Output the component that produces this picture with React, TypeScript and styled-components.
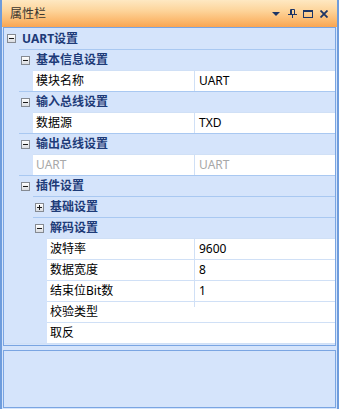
import styled, { createGlobalStyle } from 'styled-components';

const GlobalStyle = createGlobalStyle`
  html, body { margin: 0; padding: 0; background: #ffffff; }
  body { font-family: "Noto Sans", "Noto Sans CJK SC", sans-serif; }
`;

type Divider = 'full' | 'stub' | 'none';

type Item =
  | { kind: 'cat'; level: number; title: string; open: boolean }
  | { kind: 'prop'; level: number; label: string; value: string; disabled?: boolean; divider?: Divider };

const items: Item[] = [
  { kind: 'cat', level: 0, title: 'UART设置', open: true },
  { kind: 'cat', level: 1, title: '基本信息设置', open: true },
  { kind: 'prop', level: 2, label: '模块名称', value: 'UART' },
  { kind: 'cat', level: 1, title: '输入总线设置', open: true },
  { kind: 'prop', level: 2, label: '数据源', value: 'TXD' },
  { kind: 'cat', level: 1, title: '输出总线设置', open: true },
  { kind: 'prop', level: 2, label: 'UART', value: 'UART', disabled: true },
  { kind: 'cat', level: 1, title: '插件设置', open: true },
  { kind: 'cat', level: 2, title: '基础设置', open: false },
  { kind: 'cat', level: 2, title: '解码设置', open: true },
  { kind: 'prop', level: 3, label: '波特率', value: '9600' },
  { kind: 'prop', level: 3, label: '数据宽度', value: '8' },
  { kind: 'prop', level: 3, label: '结束位Bit数', value: '1' },
  { kind: 'prop', level: 3, label: '校验类型', value: '', divider: 'stub' },
  { kind: 'prop', level: 3, label: '取反', value: '', divider: 'none' },
];

// divider between name and value sits at x=190 inside the grid
const LABEL_END = 190;
const indentOf = (level: number) => 1 + level * 14;

export default function App() {
  return (
    <>
      <GlobalStyle />
      <Panel>
        <Header>
          <Title>属性栏</Title>
          <HeaderButtons>
            <HeaderButton>
              <svg width="8" height="4" viewBox="0 0 8 4">
                <polygon points="0,0 8,0 4,4" fill="#1c3566" />
              </svg>
            </HeaderButton>
            <HeaderButton>
              <svg width="9" height="9" viewBox="0 0 9 9">
                <path d="M2.5 0.5 H6.5 V5 M2.5 0.5 V5 M3.5 0.5 V5" stroke="#1c3566" fill="none" />
                <path d="M0 5.5 H9 M4.5 5.5 V9" stroke="#1c3566" fill="none" />
              </svg>
            </HeaderButton>
            <HeaderButton>
              <svg width="10" height="8" viewBox="0 0 10 8">
                <rect x="0.5" y="0.5" width="9" height="7" stroke="#1c3566" fill="none" />
                <path d="M0 1.5 H10" stroke="#1c3566" />
              </svg>
            </HeaderButton>
            <HeaderButton>
              <svg width="8" height="8" viewBox="0 0 8 8">
                <path d="M0.5 0.5 L7.5 7.5 M7.5 0.5 L0.5 7.5" stroke="#1c3566" strokeWidth="1.8" />
              </svg>
            </HeaderButton>
          </HeaderButtons>
        </Header>
        <Body>
          <Grid>
            {items.map((item, idx) => (
              <Row key={`row_${idx}`} $indent={indentOf(item.level)}>
                {item.kind === 'cat' ? (
                  <CategoryCell $first={idx === 0}>
                    <Toggle>
                      <ToggleMinus />
                      {!item.open && <TogglePlus />}
                    </Toggle>
                    <CategoryTitle>{item.title}</CategoryTitle>
                  </CategoryCell>
                ) : (
                  <PropertyCell>
                    <NameCell $width={LABEL_END - indentOf(item.level)} $disabled={item.disabled}>
                      {item.label}
                    </NameCell>
                    <ValueCell $divider={item.divider ?? 'full'} $disabled={item.disabled}>
                      {item.value}
                    </ValueCell>
                  </PropertyCell>
                )}
              </Row>
            ))}
            <GridTail />
          </Grid>
          <Description />
        </Body>
      </Panel>
    </>
  );
}

const Panel = styled.div`
  width: 339px;
  height: 409px;
  box-sizing: border-box;
  padding: 0 2px;
  background: #6e9cdc;
  display: flex;
  flex-direction: column;
`;

const Header = styled.div`
  height: 27px;
  flex-shrink: 0;
  display: flex;
  align-items: center;
  justify-content: space-between;
  padding-left: 8px;
  padding-right: 5px;
  background: linear-gradient(to bottom, #fee8c2 0%, #fdd49a 40%, #fbb66a 80%, #f9a552 100%);
`;

const Title = styled.span`
  font-size: 12px;
  color: #3a3530;
  line-height: 27px;
`;

const HeaderButtons = styled.div`
  display: flex;
  align-items: center;
`;

const HeaderButton = styled.div`
  width: 16px;
  height: 16px;
  display: flex;
  align-items: center;
  justify-content: center;
`;

const Body = styled.div`
  flex: 1;
  display: flex;
  flex-direction: column;
  gap: 4px;
  padding: 0 1px 1px;
  background: #d5e4fb;
`;

const Grid = styled.div`
  border: 1px solid #7aa5e2;
  background: #d5e4fb;
  display: flex;
  flex-direction: column;
`;

const Row = styled.div<{ $indent: number }>`
  height: 21px;
  display: flex;
  padding-left: ${p => p.$indent}px;
`;

const CategoryCell = styled.div<{ $first?: boolean }>`
  flex: 1;
  display: flex;
  align-items: center;
  border-top: ${p => (p.$first ? 'none' : '1px solid #a9c8f1')};
`;

const Toggle = styled.div`
  position: relative;
  width: 9px;
  height: 9px;
  box-sizing: border-box;
  margin-left: 2px;
  margin-right: 6px;
  border: 1px solid #858a92;
  background: linear-gradient(to bottom, #ffffff, #d9dce1);
`;

const ToggleMinus = styled.span`
  position: absolute;
  left: 1px;
  top: 3px;
  width: 5px;
  height: 1px;
  background: #1a1a1a;
`;

const TogglePlus = styled.span`
  position: absolute;
  left: 3px;
  top: 1px;
  width: 1px;
  height: 5px;
  background: #1a1a1a;
`;

const CategoryTitle = styled.span`
  font-size: 12px;
  font-weight: bold;
  color: #1e3b78;
  line-height: 20px;
  white-space: nowrap;
`;

const PropertyCell = styled.div`
  flex: 1;
  display: flex;
  background: #ffffff;
  border-top: 1px solid #d0e0f6;
`;

const NameCell = styled.div<{ $width: number; $disabled?: boolean }>`
  width: ${p => p.$width}px;
  flex-shrink: 0;
  box-sizing: border-box;
  padding-left: 3px;
  font-size: 12px;
  line-height: 20px;
  color: ${p => (p.$disabled ? '#a8a8a8' : '#000000')};
  white-space: nowrap;
`;

const ValueCell = styled.div<{ $divider: Divider; $disabled?: boolean }>`
  position: relative;
  flex: 1;
  padding-left: 4px;
  font-size: 12px;
  line-height: 20px;
  color: ${p => (p.$disabled ? '#a8a8a8' : '#000000')};
  border-left: 1px solid ${p => (p.$divider === 'full' ? '#d0e0f6' : 'transparent')};

  &::before {
    content: '';
    display: ${p => (p.$divider === 'stub' ? 'block' : 'none')};
    position: absolute;
    left: -1px;
    top: 0;
    width: 1px;
    height: 5px;
    background: #d0e0f6;
  }
`;

const GridTail = styled.div`
  height: 2px;
  box-sizing: border-box;
  border-top: 1px solid #d0e0f6;
`;

const Description = styled.div`
  flex: 1;
  border: 1px solid #7aa5e2;
  background: #d5e4fb;
`;
